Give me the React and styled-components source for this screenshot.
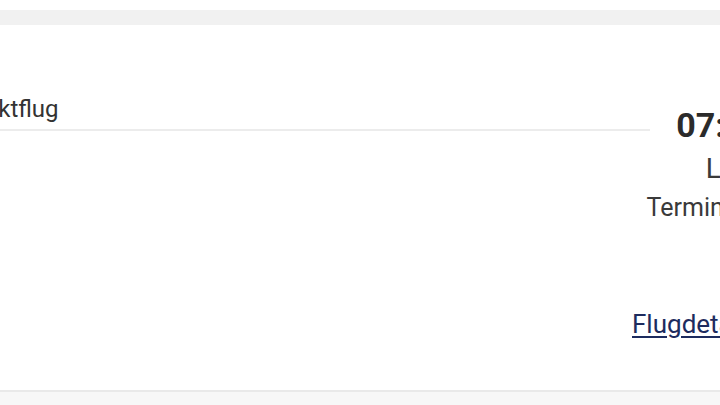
import React from "react";
import styled, { createGlobalStyle } from "styled-components";

const Global = createGlobalStyle`
  html, body {
    margin: 0;
    padding: 0;
    background: #f7f7f7;
    font-family: Roboto, "Liberation Sans", Arial, sans-serif;
    color: #333;
  }
  body { overflow: hidden; }
`;

const Viewport = styled.div`
  width: 720px;
  height: 405px;
  overflow: hidden;
  background: #f7f7f7;
`;

const TopGap = styled.div`
  height: 10px;
  background: #fff;
`;

const Band = styled.div`
  height: 15px;
  background: #f1f1f1;
`;

const Card = styled.div`
  width: 1000px;
  margin-left: -44px;
  height: 367px;
  box-sizing: border-box;
  background: #fff;
  border-bottom: 2px solid #e9e9e9;
  padding-top: 70px;
  display: flex;
  align-items: flex-start;
`;

const Timeline = styled.div`
  flex: none;
  width: 694px;
  margin-right: -18px;
`;

const Label = styled.div`
  font-size: 24px;
  line-height: 28px;
  color: #333;
  padding-bottom: 6px;
`;

const Line = styled.div`
  height: 2px;
  background: #ececec;
`;

const Arrival = styled.div`
  flex: none;
  padding-top: 10px;
  display: flex;
  flex-direction: column;
  align-items: flex-end;
  text-align: right;
`;

const Time = styled.div`
  font-size: 34px;
  font-weight: 700;
  line-height: 40px;
  color: #2b2b2b;
`;

const Airport = styled.div`
  margin-top: 8px;
  font-size: 28px;
  line-height: 32px;
  color: #3a3a3a;
`;

const Terminal = styled.div`
  margin-top: 8px;
  font-size: 25px;
  line-height: 30px;
  color: #3a3a3a;
`;

const Details = styled.a`
  margin-top: 86px;
  margin-right: 5px;
  font-size: 26px;
  line-height: 30px;
  color: #1d2b5e;
  text-decoration: underline;
  text-underline-offset: 3px;
`;

export default function App() {
  return (
    <>
      <Global />
      <Viewport>
        <TopGap />
        <Band />
        <Card>
          <Timeline>
            <Label>Direktflug</Label>
            <Line />
          </Timeline>
          <Arrival>
            <Time>07:35</Time>
            <Airport>LGW</Airport>
            <Terminal>Terminal 5</Terminal>
            <Details href="#">Flugdetails</Details>
          </Arrival>
        </Card>
      </Viewport>
    </>
  );
}
